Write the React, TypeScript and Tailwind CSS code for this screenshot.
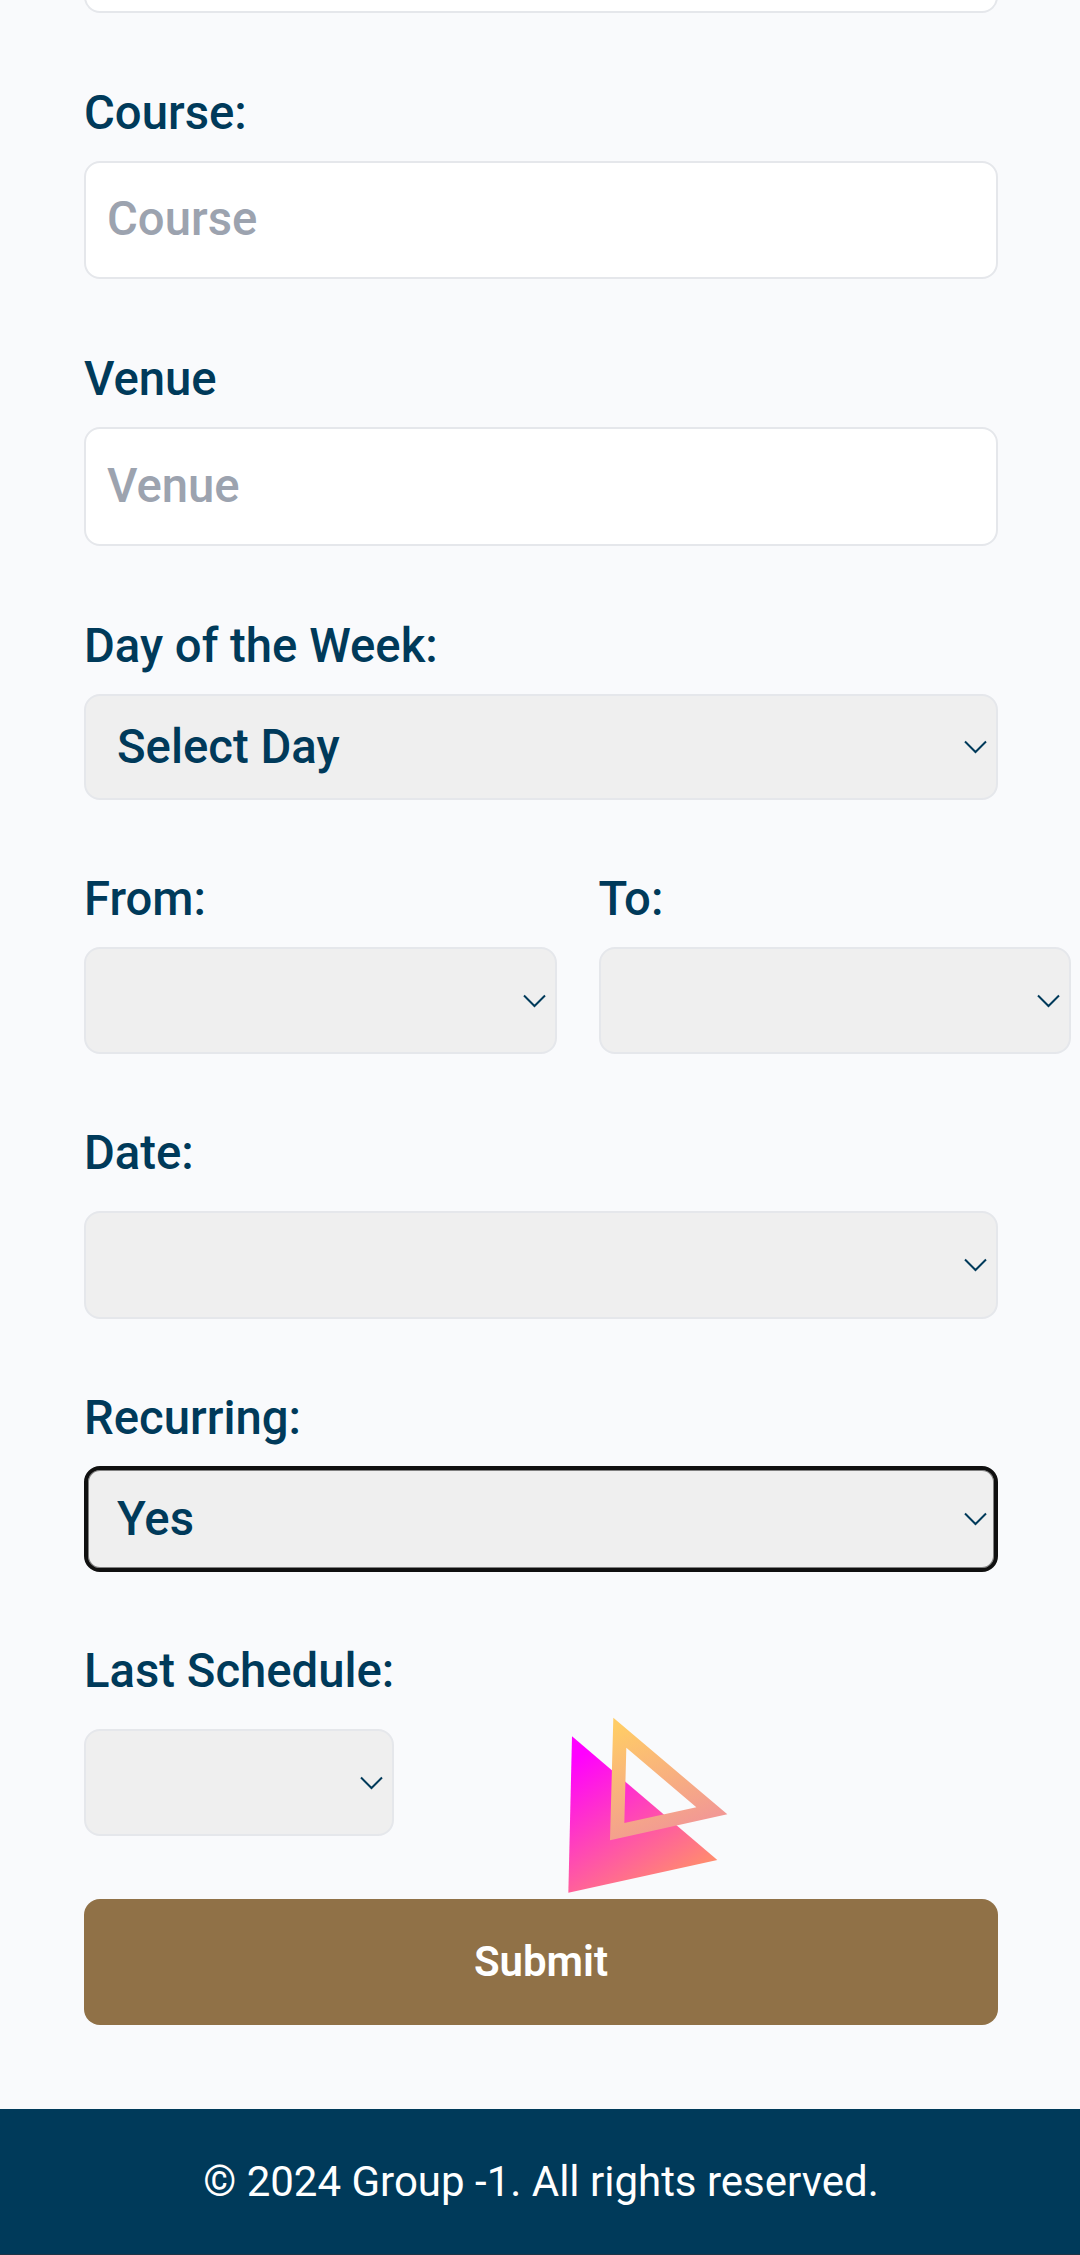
import type { ReactNode } from "react";

function Label({ children, className = "" }: { children: ReactNode; className?: string }) {
  return <label className={`block h-[74px] text-[47.25px] leading-[74px] font-medium whitespace-nowrap ${className}`}>{children}</label>;
}

function TextInput({ placeholder, className = "" }: { placeholder: string; className?: string }) {
  return (
    <input
      placeholder={placeholder}
      className={`block w-full rounded-[16px] border-2 border-[#e5e7eb] bg-white px-[21px] pb-[2px] text-[47.25px] font-medium outline-none placeholder:text-[#9ca3af] ${className}`}
    />
  );
}

function Select({ value = "", className = "", focused = false }: { value?: string; className?: string; focused?: boolean }) {
  const border = focused
    ? "border-4 border-[#101010] pl-[29px] shadow-[inset_0_0_0_1px_#808080]"
    : "border-2 border-[#e5e7eb] pl-[31px]";
  return (
    <div className={`relative ${className}`}>
      <select className={`block size-full appearance-none rounded-[16px] bg-[#efefef] text-[47.25px] font-medium outline-none ${border}`}>
        <option>{value}</option>
      </select>
      <svg className="pointer-events-none absolute top-1/2 right-[11px] -mt-[7px] h-[14px] w-[23px]" viewBox="0 0 23 14" fill="none" stroke="#003a5a" strokeWidth="2">
        <path d="M1 1.5 11.5 12 22 1.5" />
      </svg>
    </div>
  );
}

function FloatingTriangles() {
  return (
    <svg className="pointer-events-none absolute top-[1690px] left-[540px] size-[220px]" viewBox="0 0 660 660">
      <defs>
        <linearGradient id="pink" gradientUnits="userSpaceOnUse" x1="130" y1="190" x2="380" y2="590">
          <stop offset="0" stopColor="#ff00ff" />
          <stop offset="1" stopColor="#ff8a70" />
        </linearGradient>
        <linearGradient id="amber" gradientUnits="userSpaceOnUse" x1="230" y1="110" x2="370" y2="440">
          <stop offset="0" stopColor="#ffcc66" />
          <stop offset="1" stopColor="#f29994" />
        </linearGradient>
      </defs>
      <path d="M96 139 532 510 85 608Z" fill="url(#pink)" />
      <path fillRule="evenodd" d="M220 83 562 373 210 451ZM259 173 253 399 469 352Z" fill="url(#amber)" />
    </svg>
  );
}

export default function App() {
  return (
    <div className="relative flex h-[2255px] w-[1080px] flex-col overflow-hidden bg-[#f9fafc] font-[Roboto,sans-serif] text-[#003a5a]">
      <form className="ml-[84px] w-[914px]">
        <div className="h-[13px] overflow-hidden">
          <div className="-mt-[106px] h-[119px] rounded-[16px] border-2 border-[#e5e7eb] bg-white" />
        </div>

        <Label className="mt-[63px]">Course:</Label>
        <TextInput placeholder="Course" className="mt-[11px] h-[118px]" />

        <Label className="mt-[63px]">Venue</Label>
        <TextInput placeholder="Venue" className="mt-[11px] h-[119px]" />

        <Label className="mt-[63px]">Day of the Week:</Label>
        <Select value="Select Day" className="mt-[11px] h-[106px]" />

        <div className="mt-[62px] flex w-[987px] gap-[42px]">
          <div className="flex-1">
            <Label>From:</Label>
            <Select className="mt-[11px] h-[107px]" />
          </div>
          <div className="flex-1">
            <Label>To:</Label>
            <Select className="mt-[11px] h-[107px]" />
          </div>
        </div>

        <Label className="mt-[62px]">Date:</Label>
        <Select className="mt-[21px] h-[108px]" />

        <Label className="mt-[62px]">Recurring:</Label>
        <Select value="Yes" focused className="mt-[11px] h-[106px]" />

        <Label className="mt-[62px]">Last Schedule:</Label>
        <Select className="mt-[21px] h-[107px] w-[310px]" />

        <button type="button" className="mt-[63px] block h-[126px] w-full rounded-[16px] bg-[#907147] pb-[2px] text-[42px] font-semibold text-white">
          Submit
        </button>
      </form>

      <footer className="mt-[84px] flex h-[146px] items-center justify-center border-b border-[#1c3448] bg-[#003a5a] pl-[2px] text-[42px] text-white">
        © 2024 Group -1. All rights reserved.
      </footer>

      <FloatingTriangles />
    </div>
  );
}
